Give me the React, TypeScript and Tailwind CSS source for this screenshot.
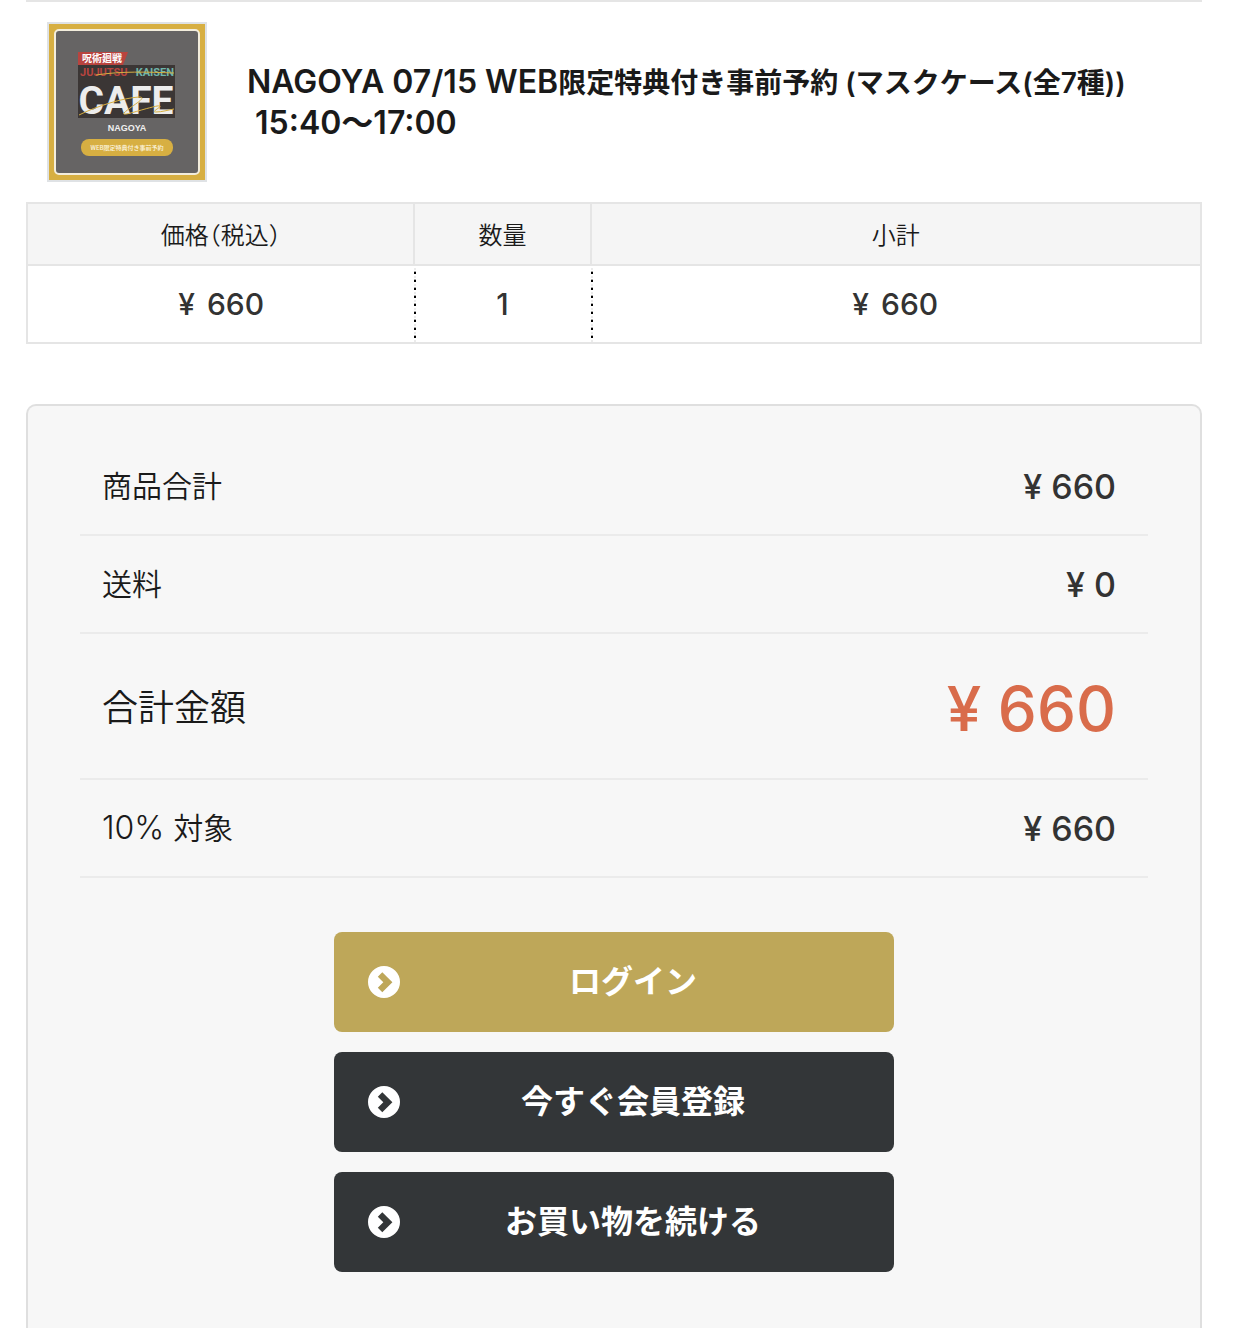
type Row = { label: string; rate?: string; price: string; total?: boolean }

const summary: Row[] = [
  { label: "商品合計", price: "660" },
  { label: "送料", price: "0" },
  { label: "合計金額", price: "660", total: true },
  { label: "対象", rate: "10%", price: "660" },
]

export default function App() {
  return (
    <main className="bg-white pl-[26px] pr-[38px] font-['Inter','Noto_Sans_CJK_JP',sans-serif] text-[#1a1a1a]">
      <CartItem />
      <PriceTable />
      <Summary />
    </main>
  )
}

function CartItem() {
  return (
    <div className="flex items-center gap-10 border-t-2 border-[#e5e5e5] px-[21px] py-5">
      <Thumbnail />
      <div className="text-[28px] font-semibold leading-10">
        <div>
          <span className="text-[32px]">NAGOYA 07/15 WEB</span>
          限定特典付き事前予約 (マスクケース(全7種))
        </div>
        <div className="whitespace-pre text-[32px]"> 15:40〜17:00</div>
      </div>
    </div>
  )
}

function Thumbnail() {
  return (
    <svg viewBox="0 0 160 160" className="size-40 flex-shrink-0" role="img" aria-label="JUJUTSU KAISEN CAFE NAGOYA">
      <rect width="160" height="160" fill="#dfe2e5" />
      <rect x="2" y="2" width="156" height="156" fill="#d7af42" />
      <rect x="8" y="8" width="144" height="144" rx="4" fill="#666464" stroke="#f3eddc" strokeWidth="2" />
      <path d="M31 30H81L76 43H31Z" fill="#b8443f" />
      <text x="35" y="40" fontSize="10" fontWeight="700" fill="#fff" className="font-['Noto_Sans_CJK_JP',sans-serif]">
        呪術廻戦
      </text>
      <rect x="31" y="43" width="97" height="53" fill="#3b3635" />
      <g fontWeight="700" className="font-['Roboto',sans-serif]">
        <text x="33" y="54" fontSize="11" fill="#b8443f">JUJUTSU</text>
        <text x="127" y="54" fontSize="11" textAnchor="end" fill="#6fb5aa">KAISEN</text>
        <text x="79" y="92" fontSize="39" textAnchor="middle" fill="#ededed">CAFE</text>
      </g>
      <path
        d="M49 53C75 49 100 50 127 51M32 93C50 84 76 76 92 75C102 75 84 84 77 91C74 95 92 88 110 84C120 83 102 90 109 90C115 90 121 88 127 87"
        fill="none"
        stroke="#d7af42"
        strokeWidth="1"
      />
      <text x="80" y="109" fontSize="9" fontWeight="700" textAnchor="middle" fill="#f0f0f0" className="font-['Liberation_Sans',sans-serif]">
        NAGOYA
      </text>
      <rect x="34" y="117" width="92" height="17" rx="8" fill="#d7af42" />
      <text x="80" y="128" fontSize="6" fontWeight="500" textAnchor="middle" fill="#fdf6e0" className="font-['Noto_Sans_CJK_JP',sans-serif]">
        WEB限定特典付き事前予約
      </text>
    </svg>
  )
}

function PriceTable() {
  return (
    <table className="w-full table-fixed border-collapse border-2 border-[#e5e5e5] text-center">
      <thead className="bg-[#f5f5f5] text-[24px]">
        <tr className="h-[62px] border-b-2 border-[#e5e5e5]">
          <th className="w-[33%] border-r-2 border-[#e5e5e5] pt-1 font-[350] [font-feature-settings:'halt']">価格（税込）</th>
          <th className="w-[15%] border-r-2 border-[#e5e5e5] pt-1 font-[350]">数量</th>
          <th className="pt-1 font-[350]">小計</th>
        </tr>
      </thead>
      <tbody className="text-[30px] font-medium text-[#333]">
        <tr className="h-[78px]">
          <td>
            <span className="mr-1">¥</span> 660
          </td>
          <td className={dotted}>1</td>
          <td className={dotted}>
            <span className="mr-1">¥</span> 660
          </td>
        </tr>
      </tbody>
    </table>
  )
}

// dotted divider on the left edge of a cell
const dotted =
  "bg-[repeating-linear-gradient(#fff_0_2px,#ebebeb_2px_4px,#fff_4px_5px,#aaa_5px_6px,#000_6px_8px)] bg-[length:2px_100%] bg-no-repeat"

function Summary() {
  return (
    <section className="mt-[60px] rounded-t-[10px] border-2 border-b-0 border-[#dfdfdf] bg-[#f7f7f7] px-[52px] pb-[56px] pt-8">
      <dl>
        {summary.map((row) => (
          <SummaryRow key={row.label} row={row} />
        ))}
      </dl>
      <div className="mx-auto mt-[54px] flex max-w-[560px] flex-col gap-5">
        <ActionButton label="ログイン" primary />
        <ActionButton label="今すぐ会員登録" />
        <ActionButton label="お買い物を続ける" />
      </div>
    </section>
  )
}

function SummaryRow({ row }: { row: Row }) {
  if (row.total) {
    return (
      <div className="flex h-[146px] items-center justify-between border-b-2 border-[#ebebeb] pl-[22px] pr-8 pt-1">
        <dt className="text-[36px] font-[350]">{row.label}</dt>
        <dd className="text-[62px] font-medium text-[#d96c4b]">¥ {row.price}</dd>
      </div>
    )
  }

  return (
    <div className="flex h-[98px] items-center justify-between border-b-2 border-[#ebebeb] pl-[22px] pr-8">
      <dt className="text-[30px] font-[350]">
        {row.rate && <span className="text-[32px]">{row.rate} </span>}
        {row.label}
      </dt>
      <dd className="text-[34px] font-medium text-[#333]">¥ {row.price}</dd>
    </div>
  )
}

function ActionButton({ label, primary }: { label: string; primary?: boolean }) {
  const color = primary ? "bg-[#bea759]" : "bg-[#333638]"
  return (
    <button type="button" className={`flex h-[100px] w-full items-center rounded-lg pl-[34px] pr-7 text-white ${color}`}>
      <svg viewBox="0 0 32 32" className="size-8 flex-shrink-0" aria-hidden="true">
        <path
          fillRule="evenodd"
          fill="currentColor"
          d="M16 0a16 16 0 1 0 0 32a16 16 0 1 0 0-32ZM14.3 6.2L24.4 16.2L14.3 26.2L9.8 21.7L15.3 16.2L9.8 10.7Z"
        />
      </svg>
      <span className="flex-1 text-[32px] font-semibold">{label}</span>
    </button>
  )
}
